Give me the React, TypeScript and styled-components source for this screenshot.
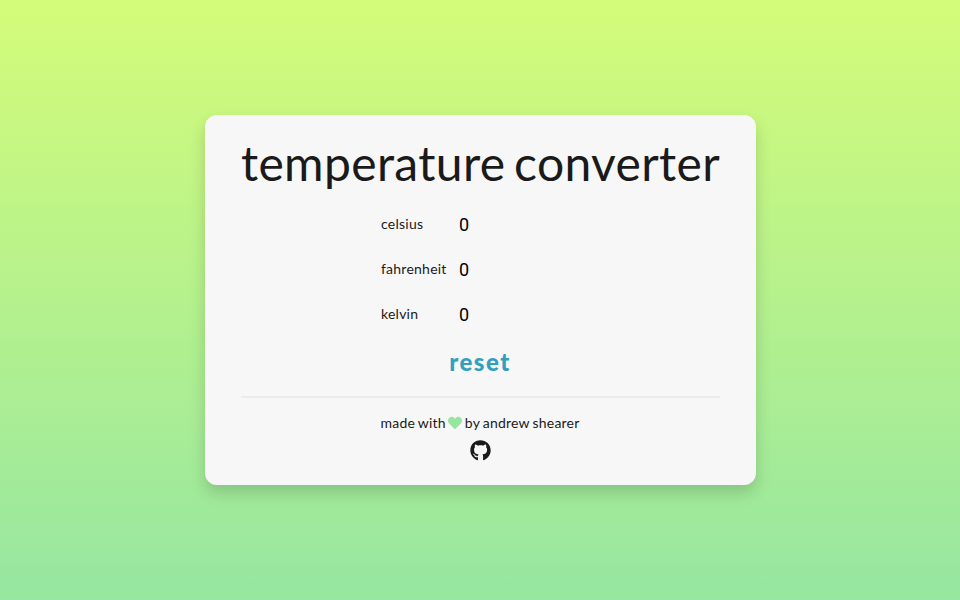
import React, { useState } from "react";
import styled, { createGlobalStyle } from "styled-components";
import { FaHeart, FaGithub } from "react-icons/fa";

const GlobalStyle = createGlobalStyle`
  *, *::before, *::after { box-sizing: border-box; }
  body { margin: 0; }
`;

const Page = styled.main`
  min-height: 100vh;
  display: flex;
  align-items: center;
  justify-content: center;
  background: linear-gradient(180deg, #d4fc79 0%, #96e6a1 100%);
  color: #1a1a1a;
  font-family: Lato, sans-serif;
  font-size: 14px;
`;

const Card = styled.section`
  width: 551px;
  height: 370px;
  padding: 19px 36px 0;
  display: flex;
  flex-direction: column;
  align-items: center;
  background: #f7f7f7;
  border-radius: 12px;
  box-shadow: 0 8px 16px rgba(0, 0, 0, 0.16);
`;

const Title = styled.h1`
  margin: 0;
  padding-left: 1px;
  font-size: 48px;
  font-weight: 400;
  line-height: 58px;
  letter-spacing: 0.35px;
  word-spacing: -4px;
  white-space: nowrap;
`;

const Fields = styled.div`
  width: 198px;
  margin-top: 10px;
  display: grid;
  grid-auto-rows: 45px;
`;

const Field = styled.label`
  display: grid;
  grid-template-columns: 78px 1fr;
  align-items: center;
`;

const FieldName = styled.span`
  padding-bottom: 2px;
  letter-spacing: 0.24px;
`;

const ValueInput = styled.input`
  width: 100%;
  padding: 0;
  border: 0;
  outline: 0;
  background: transparent;
  color: #000;
  font-family: Roboto, sans-serif;
  font-size: 18px;
`;

const ResetButton = styled.button`
  margin-top: 10px;
  padding: 0;
  border: 0;
  background: transparent;
  color: #329fbe;
  font: 900 24px/29px Lato, sans-serif;
  letter-spacing: 1.5px;
`;

const Footer = styled.footer`
  width: 479px;
  margin-top: 20px;
  padding-top: 15px;
  display: flex;
  flex-direction: column;
  align-items: center;
  border-top: 2px solid #ececec;
`;

const Credit = styled.div`
  display: flex;
  align-items: center;
  gap: 2.5px;
  line-height: 20px;
  letter-spacing: 0.2px;
  word-spacing: -0.7px;
`;

const Heart = styled(FaHeart)`
  color: #96e6a1;
`;

const GithubLink = styled.a`
  display: flex;
  margin-top: 7px;
  color: #1a1a1a;
`;

const names = ["celsius", "fahrenheit", "kelvin"];

export default function App() {
  const [values, setValues] = useState(["0", "0", "0"]);
  const update = (index: number, value: string) => {
    const number = Number(value);
    if (value === "" || Number.isNaN(number)) {
      setValues(values.map((v, i) => (i === index ? value : v)));
      return;
    }
    const c = index === 0 ? number : index === 1 ? ((number - 32) * 5) / 9 : number - 273.15;
    const next = [c, (c * 9) / 5 + 32, c + 273.15].map((v) => String(Math.round(v * 100) / 100));
    next[index] = value;
    setValues(next);
  };
  return (
    <>
      <GlobalStyle />
      <Page>
        <Card>
          <Title>temperature converter</Title>
          <Fields>
            {names.map((name, i) => (
              <Field key={name}>
                <FieldName>{name}</FieldName>
                <ValueInput value={values[i]} onChange={(e) => update(i, e.target.value)} />
              </Field>
            ))}
          </Fields>
          <ResetButton onClick={() => setValues(["0", "0", "0"])}>reset</ResetButton>
          <Footer>
            <Credit>
              <span>made with</span>
              <Heart size={14} />
              <span>by andrew shearer</span>
            </Credit>
            <GithubLink href="https://github.com" aria-label="GitHub">
              <FaGithub size={21} />
            </GithubLink>
          </Footer>
        </Card>
      </Page>
    </>
  );
}
